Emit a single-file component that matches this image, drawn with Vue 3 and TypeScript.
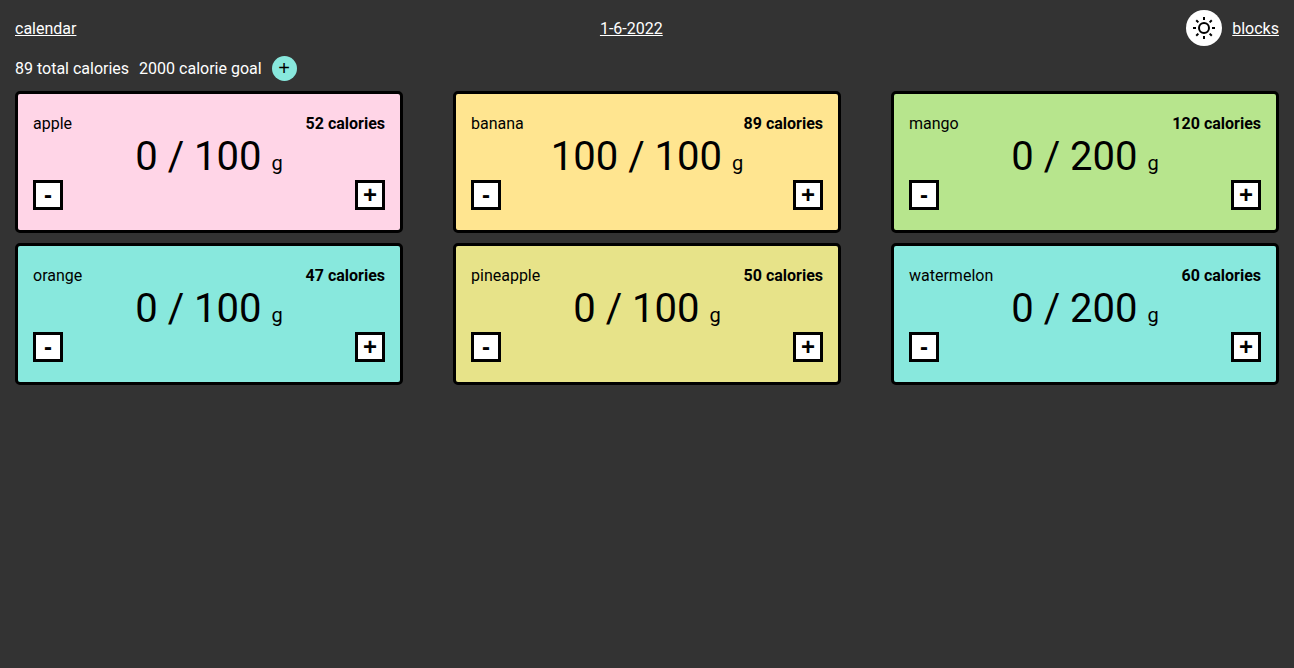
<script setup lang="ts">
import { computed, ref } from 'vue'

interface Food {
  name: string
  calories: number
  eaten: number
  serving: number
  tone: string
}

const goal = ref(2000)

const foods = ref<Food[]>([
  { name: 'apple', calories: 52, eaten: 0, serving: 100, tone: 'pink' },
  { name: 'banana', calories: 89, eaten: 100, serving: 100, tone: 'yellow' },
  { name: 'mango', calories: 120, eaten: 0, serving: 200, tone: 'green' },
  { name: 'orange', calories: 47, eaten: 0, serving: 100, tone: 'aqua' },
  { name: 'pineapple', calories: 50, eaten: 0, serving: 100, tone: 'olive' },
  { name: 'watermelon', calories: 60, eaten: 0, serving: 200, tone: 'aqua' },
])

const total = computed(() =>
  Math.round(foods.value.reduce((sum, f) => sum + (f.calories * f.eaten) / f.serving, 0)),
)

function add(food: Food) {
  food.eaten += food.serving
}

function remove(food: Food) {
  food.eaten = Math.max(0, food.eaten - food.serving)
}
</script>

<template>
  <div class="page">
    <nav class="nav">
      <a href="#calendar">calendar</a>
      <a href="#day">1-6-2022</a>
      <div class="nav-end">
        <button class="theme" type="button" aria-label="toggle theme">
          <svg viewBox="0 0 24 24" width="24" height="24" fill="none" stroke="#000" stroke-width="2">
            <circle cx="12" cy="12" r="5" />
            <path d="M12 1v3M12 20v3M1 12h3M20 12h3M4.22 4.22l2.12 2.12M17.66 17.66l2.12 2.12M4.22 19.78l2.12-2.12M17.66 6.34l2.12-2.12" />
          </svg>
        </button>
        <a href="#blocks">blocks</a>
      </div>
    </nav>

    <section class="summary">
      <span>{{ total }} total calories</span>
      <span>{{ goal }} calorie goal</span>
      <button class="new" type="button" aria-label="add food">+</button>
    </section>

    <main class="grid">
      <article v-for="food in foods" :key="food.name" class="card" :class="food.tone">
        <header class="row">
          <span>{{ food.name }}</span>
          <strong>{{ food.calories }} calories</strong>
        </header>
        <p class="amount">{{ food.eaten }} / {{ food.serving }} <span class="unit">g</span></p>
        <div class="row">
          <button class="step" type="button" :aria-label="`less ${food.name}`" @click="remove(food)">-</button>
          <button class="step" type="button" :aria-label="`more ${food.name}`" @click="add(food)">+</button>
        </div>
      </article>
    </main>
  </div>
</template>

<style>
body {
  background: #333;
}
</style>

<style scoped>
.page {
  box-sizing: border-box;
  padding: 10px 15px;
  display: flex;
  flex-direction: column;
  gap: 10px;
  font-family: Roboto, "Liberation Sans", sans-serif;
  font-size: 16px;
  line-height: 19px;
  color: #fff;
}

.nav,
.row {
  display: flex;
  justify-content: space-between;
  align-items: center;
}

.nav-end,
.summary {
  display: flex;
  align-items: center;
  gap: 10px;
}

a {
  color: inherit;
}

button {
  box-sizing: border-box;
  padding: 0;
  border: none;
  font-family: "Liberation Sans", Arial, sans-serif;
  text-align: center;
  color: #000;
  cursor: pointer;
}

.theme {
  display: flex;
  justify-content: center;
  align-items: center;
  width: 36px;
  height: 36px;
  border-radius: 50%;
  background: #fff;
}

.new {
  width: 25px;
  height: 25px;
  border-radius: 50%;
  background: #88e8dd;
  font-size: 20px;
  line-height: 23px;
}

.grid {
  display: grid;
  grid-template-columns: repeat(3, minmax(0, 1fr));
  gap: 10px 50px;
}

.card {
  padding: 20px 15px;
  border: 3px solid #000;
  border-radius: 5px;
  color: #000;
}

.pink {
  background: #ffd5e7;
}

.yellow {
  background: #ffe590;
}

.green {
  background: #b7e58d;
}

.aqua {
  background: #88e8dd;
}

.olive {
  background: #e7e389;
}

.amount {
  margin: 0;
  font-size: 40px;
  line-height: 47px;
  text-align: center;
}

.unit {
  font-size: 20px;
  line-height: 23px;
}

.step {
  width: 30px;
  height: 30px;
  border: 3px solid #000;
  background: #fff;
  font-size: 24px;
  font-weight: 700;
  line-height: 24px;
}
</style>
